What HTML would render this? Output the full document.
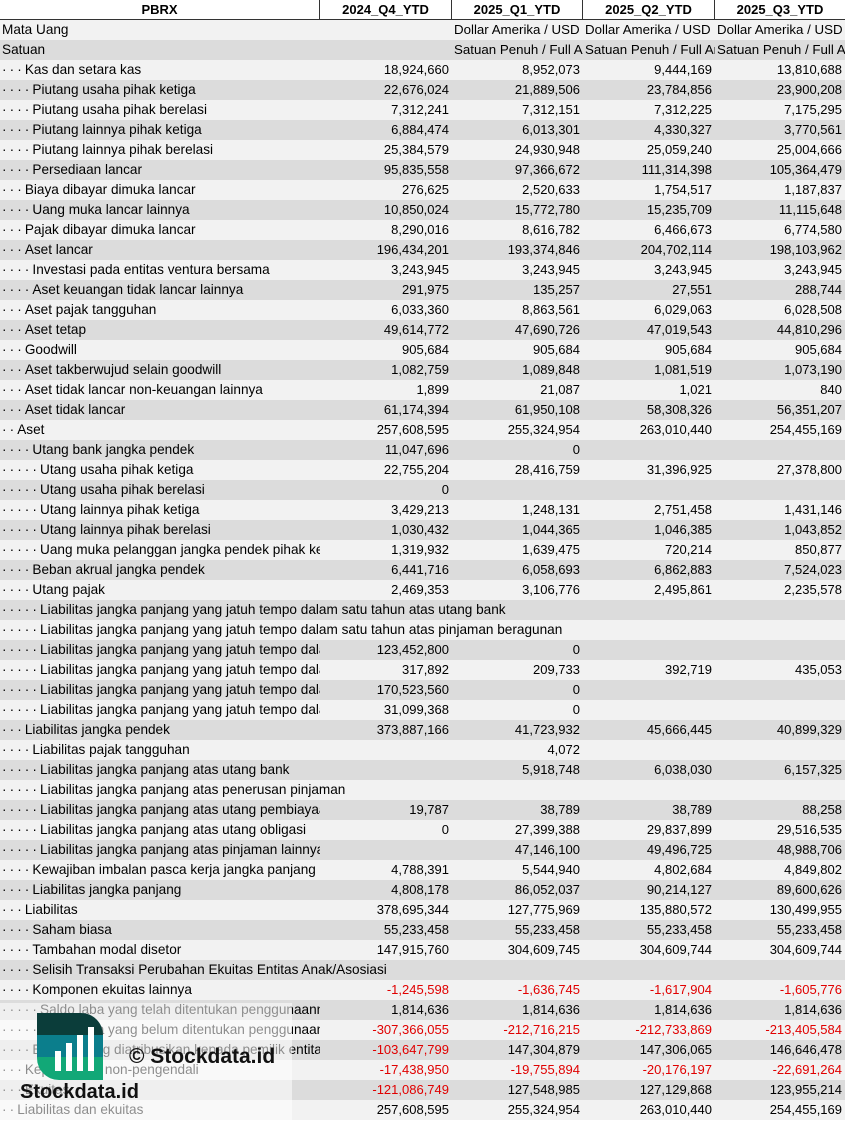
<!DOCTYPE html>
<html><head><meta charset="utf-8"><style>
*{margin:0;padding:0;box-sizing:border-box}
body{width:845px;height:1121px;overflow:hidden;background:#fff;font-family:"Liberation Sans",Arial,sans-serif;font-size:13px;color:#000;position:relative}
.h{display:flex;height:20px;background:#fff;border-bottom:1px solid #333;font-weight:bold}
.h span{display:block;text-align:center;line-height:19px;border-right:1px solid #333;overflow:hidden;white-space:nowrap}
.r{display:flex;height:20px;line-height:20px;white-space:nowrap}
.r:nth-child(odd){background:#f2f2f2}
.r:nth-child(even){background:#dcdcdc}
.r span{display:block;overflow:hidden;white-space:nowrap}
.l{width:320px;padding-left:2px;font-size:13.6px}
.l i{font-style:normal;letter-spacing:-0.35px}
.w{width:845px}
.c1{width:132px}.c2{width:131px}.c3{width:132px}.c4{width:130px}
.v{text-align:right;padding-right:3px}
.t{text-align:left;padding-left:2px;font-size:13.3px}
.red{color:#e00000}
.ov{position:absolute;left:0;top:1003px;width:292px;height:118px;background:rgba(255,255,255,0.55)}
.logo{position:absolute;left:37px;top:1013px;width:66px;height:67px;border-radius:0 22px 0 22px;overflow:hidden}
.wm1{position:absolute;left:129px;top:1045px;font-weight:bold;font-size:21px;color:#111}
.wm2{position:absolute;left:20px;top:1081px;font-weight:bold;font-size:20px;color:#111}
</style></head><body>
<div class="h"><span style="width:320px">PBRX</span><span style="width:132px">2024_Q4_YTD</span><span style="width:131px">2025_Q1_YTD</span><span style="width:132px">2025_Q2_YTD</span><span style="width:130px;border-right:none">2025_Q3_YTD</span></div>
<div>
<div class="r"><span class="l">Mata Uang</span><span class="c1"></span><span class="c2 t">Dollar Amerika / USD</span><span class="c3 t">Dollar Amerika / USD</span><span class="c4 t">Dollar Amerika / USD</span></div>
<div class="r"><span class="l">Satuan</span><span class="c1"></span><span class="c2 t">Satuan Penuh / Full Amount</span><span class="c3 t">Satuan Penuh / Full Amount</span><span class="c4 t">Satuan Penuh / Full Amount</span></div>
<div class="r"><span class="l"><i>· · · </i>Kas dan setara kas</span><span class="c1 v">18,924,660</span><span class="c2 v">8,952,073</span><span class="c3 v">9,444,169</span><span class="c4 v">13,810,688</span></div>
<div class="r"><span class="l"><i>· · · · </i>Piutang usaha pihak ketiga</span><span class="c1 v">22,676,024</span><span class="c2 v">21,889,506</span><span class="c3 v">23,784,856</span><span class="c4 v">23,900,208</span></div>
<div class="r"><span class="l"><i>· · · · </i>Piutang usaha pihak berelasi</span><span class="c1 v">7,312,241</span><span class="c2 v">7,312,151</span><span class="c3 v">7,312,225</span><span class="c4 v">7,175,295</span></div>
<div class="r"><span class="l"><i>· · · · </i>Piutang lainnya pihak ketiga</span><span class="c1 v">6,884,474</span><span class="c2 v">6,013,301</span><span class="c3 v">4,330,327</span><span class="c4 v">3,770,561</span></div>
<div class="r"><span class="l"><i>· · · · </i>Piutang lainnya pihak berelasi</span><span class="c1 v">25,384,579</span><span class="c2 v">24,930,948</span><span class="c3 v">25,059,240</span><span class="c4 v">25,004,666</span></div>
<div class="r"><span class="l"><i>· · · · </i>Persediaan lancar</span><span class="c1 v">95,835,558</span><span class="c2 v">97,366,672</span><span class="c3 v">111,314,398</span><span class="c4 v">105,364,479</span></div>
<div class="r"><span class="l"><i>· · · </i>Biaya dibayar dimuka lancar</span><span class="c1 v">276,625</span><span class="c2 v">2,520,633</span><span class="c3 v">1,754,517</span><span class="c4 v">1,187,837</span></div>
<div class="r"><span class="l"><i>· · · · </i>Uang muka lancar lainnya</span><span class="c1 v">10,850,024</span><span class="c2 v">15,772,780</span><span class="c3 v">15,235,709</span><span class="c4 v">11,115,648</span></div>
<div class="r"><span class="l"><i>· · · </i>Pajak dibayar dimuka lancar</span><span class="c1 v">8,290,016</span><span class="c2 v">8,616,782</span><span class="c3 v">6,466,673</span><span class="c4 v">6,774,580</span></div>
<div class="r"><span class="l"><i>· · · </i>Aset lancar</span><span class="c1 v">196,434,201</span><span class="c2 v">193,374,846</span><span class="c3 v">204,702,114</span><span class="c4 v">198,103,962</span></div>
<div class="r"><span class="l"><i>· · · · </i>Investasi pada entitas ventura bersama</span><span class="c1 v">3,243,945</span><span class="c2 v">3,243,945</span><span class="c3 v">3,243,945</span><span class="c4 v">3,243,945</span></div>
<div class="r"><span class="l"><i>· · · · </i>Aset keuangan tidak lancar lainnya</span><span class="c1 v">291,975</span><span class="c2 v">135,257</span><span class="c3 v">27,551</span><span class="c4 v">288,744</span></div>
<div class="r"><span class="l"><i>· · · </i>Aset pajak tangguhan</span><span class="c1 v">6,033,360</span><span class="c2 v">8,863,561</span><span class="c3 v">6,029,063</span><span class="c4 v">6,028,508</span></div>
<div class="r"><span class="l"><i>· · · </i>Aset tetap</span><span class="c1 v">49,614,772</span><span class="c2 v">47,690,726</span><span class="c3 v">47,019,543</span><span class="c4 v">44,810,296</span></div>
<div class="r"><span class="l"><i>· · · </i>Goodwill</span><span class="c1 v">905,684</span><span class="c2 v">905,684</span><span class="c3 v">905,684</span><span class="c4 v">905,684</span></div>
<div class="r"><span class="l"><i>· · · </i>Aset takberwujud selain goodwill</span><span class="c1 v">1,082,759</span><span class="c2 v">1,089,848</span><span class="c3 v">1,081,519</span><span class="c4 v">1,073,190</span></div>
<div class="r"><span class="l"><i>· · · </i>Aset tidak lancar non-keuangan lainnya</span><span class="c1 v">1,899</span><span class="c2 v">21,087</span><span class="c3 v">1,021</span><span class="c4 v">840</span></div>
<div class="r"><span class="l"><i>· · · </i>Aset tidak lancar</span><span class="c1 v">61,174,394</span><span class="c2 v">61,950,108</span><span class="c3 v">58,308,326</span><span class="c4 v">56,351,207</span></div>
<div class="r"><span class="l"><i>· · </i>Aset</span><span class="c1 v">257,608,595</span><span class="c2 v">255,324,954</span><span class="c3 v">263,010,440</span><span class="c4 v">254,455,169</span></div>
<div class="r"><span class="l"><i>· · · · </i>Utang bank jangka pendek</span><span class="c1 v">11,047,696</span><span class="c2 v">0</span><span class="c3 v"></span><span class="c4 v"></span></div>
<div class="r"><span class="l"><i>· · · · · </i>Utang usaha pihak ketiga</span><span class="c1 v">22,755,204</span><span class="c2 v">28,416,759</span><span class="c3 v">31,396,925</span><span class="c4 v">27,378,800</span></div>
<div class="r"><span class="l"><i>· · · · · </i>Utang usaha pihak berelasi</span><span class="c1 v">0</span><span class="c2 v"></span><span class="c3 v"></span><span class="c4 v"></span></div>
<div class="r"><span class="l"><i>· · · · · </i>Utang lainnya pihak ketiga</span><span class="c1 v">3,429,213</span><span class="c2 v">1,248,131</span><span class="c3 v">2,751,458</span><span class="c4 v">1,431,146</span></div>
<div class="r"><span class="l"><i>· · · · · </i>Utang lainnya pihak berelasi</span><span class="c1 v">1,030,432</span><span class="c2 v">1,044,365</span><span class="c3 v">1,046,385</span><span class="c4 v">1,043,852</span></div>
<div class="r"><span class="l"><i>· · · · · </i>Uang muka pelanggan jangka pendek pihak ketiga</span><span class="c1 v">1,319,932</span><span class="c2 v">1,639,475</span><span class="c3 v">720,214</span><span class="c4 v">850,877</span></div>
<div class="r"><span class="l"><i>· · · · </i>Beban akrual jangka pendek</span><span class="c1 v">6,441,716</span><span class="c2 v">6,058,693</span><span class="c3 v">6,862,883</span><span class="c4 v">7,524,023</span></div>
<div class="r"><span class="l"><i>· · · · </i>Utang pajak</span><span class="c1 v">2,469,353</span><span class="c2 v">3,106,776</span><span class="c3 v">2,495,861</span><span class="c4 v">2,235,578</span></div>
<div class="r"><span class="l w"><i>· · · · · </i>Liabilitas jangka panjang yang jatuh tempo dalam satu tahun atas utang bank</span></div>
<div class="r"><span class="l w"><i>· · · · · </i>Liabilitas jangka panjang yang jatuh tempo dalam satu tahun atas pinjaman beragunan</span></div>
<div class="r"><span class="l"><i>· · · · · </i>Liabilitas jangka panjang yang jatuh tempo dalam satu tahun</span><span class="c1 v">123,452,800</span><span class="c2 v">0</span><span class="c3 v"></span><span class="c4 v"></span></div>
<div class="r"><span class="l"><i>· · · · · </i>Liabilitas jangka panjang yang jatuh tempo dalam satu tahun</span><span class="c1 v">317,892</span><span class="c2 v">209,733</span><span class="c3 v">392,719</span><span class="c4 v">435,053</span></div>
<div class="r"><span class="l"><i>· · · · · </i>Liabilitas jangka panjang yang jatuh tempo dalam satu tahun</span><span class="c1 v">170,523,560</span><span class="c2 v">0</span><span class="c3 v"></span><span class="c4 v"></span></div>
<div class="r"><span class="l"><i>· · · · · </i>Liabilitas jangka panjang yang jatuh tempo dalam satu tahun</span><span class="c1 v">31,099,368</span><span class="c2 v">0</span><span class="c3 v"></span><span class="c4 v"></span></div>
<div class="r"><span class="l"><i>· · · </i>Liabilitas jangka pendek</span><span class="c1 v">373,887,166</span><span class="c2 v">41,723,932</span><span class="c3 v">45,666,445</span><span class="c4 v">40,899,329</span></div>
<div class="r"><span class="l"><i>· · · · </i>Liabilitas pajak tangguhan</span><span class="c1 v"></span><span class="c2 v">4,072</span><span class="c3 v"></span><span class="c4 v"></span></div>
<div class="r"><span class="l"><i>· · · · · </i>Liabilitas jangka panjang atas utang bank</span><span class="c1 v"></span><span class="c2 v">5,918,748</span><span class="c3 v">6,038,030</span><span class="c4 v">6,157,325</span></div>
<div class="r"><span class="l w"><i>· · · · · </i>Liabilitas jangka panjang atas penerusan pinjaman</span></div>
<div class="r"><span class="l"><i>· · · · · </i>Liabilitas jangka panjang atas utang pembiayaan konsumen</span><span class="c1 v">19,787</span><span class="c2 v">38,789</span><span class="c3 v">38,789</span><span class="c4 v">88,258</span></div>
<div class="r"><span class="l"><i>· · · · · </i>Liabilitas jangka panjang atas utang obligasi</span><span class="c1 v">0</span><span class="c2 v">27,399,388</span><span class="c3 v">29,837,899</span><span class="c4 v">29,516,535</span></div>
<div class="r"><span class="l"><i>· · · · · </i>Liabilitas jangka panjang atas pinjaman lainnya</span><span class="c1 v"></span><span class="c2 v">47,146,100</span><span class="c3 v">49,496,725</span><span class="c4 v">48,988,706</span></div>
<div class="r"><span class="l"><i>· · · · </i>Kewajiban imbalan pasca kerja jangka panjang</span><span class="c1 v">4,788,391</span><span class="c2 v">5,544,940</span><span class="c3 v">4,802,684</span><span class="c4 v">4,849,802</span></div>
<div class="r"><span class="l"><i>· · · · </i>Liabilitas jangka panjang</span><span class="c1 v">4,808,178</span><span class="c2 v">86,052,037</span><span class="c3 v">90,214,127</span><span class="c4 v">89,600,626</span></div>
<div class="r"><span class="l"><i>· · · </i>Liabilitas</span><span class="c1 v">378,695,344</span><span class="c2 v">127,775,969</span><span class="c3 v">135,880,572</span><span class="c4 v">130,499,955</span></div>
<div class="r"><span class="l"><i>· · · · </i>Saham biasa</span><span class="c1 v">55,233,458</span><span class="c2 v">55,233,458</span><span class="c3 v">55,233,458</span><span class="c4 v">55,233,458</span></div>
<div class="r"><span class="l"><i>· · · · </i>Tambahan modal disetor</span><span class="c1 v">147,915,760</span><span class="c2 v">304,609,745</span><span class="c3 v">304,609,744</span><span class="c4 v">304,609,744</span></div>
<div class="r"><span class="l w"><i>· · · · </i>Selisih Transaksi Perubahan Ekuitas Entitas Anak/Asosiasi</span></div>
<div class="r"><span class="l"><i>· · · · </i>Komponen ekuitas lainnya</span><span class="c1 v red">-1,245,598</span><span class="c2 v red">-1,636,745</span><span class="c3 v red">-1,617,904</span><span class="c4 v red">-1,605,776</span></div>
<div class="r"><span class="l"><i>· · · · · </i>Saldo laba yang telah ditentukan penggunaannya</span><span class="c1 v">1,814,636</span><span class="c2 v">1,814,636</span><span class="c3 v">1,814,636</span><span class="c4 v">1,814,636</span></div>
<div class="r"><span class="l"><i>· · · · · </i>Saldo laba yang belum ditentukan penggunaannya</span><span class="c1 v red">-307,366,055</span><span class="c2 v red">-212,716,215</span><span class="c3 v red">-212,733,869</span><span class="c4 v red">-213,405,584</span></div>
<div class="r"><span class="l"><i>· · · · </i>Ekuitas yang diatribusikan kepada pemilik entitas induk</span><span class="c1 v red">-103,647,799</span><span class="c2 v">147,304,879</span><span class="c3 v">147,306,065</span><span class="c4 v">146,646,478</span></div>
<div class="r"><span class="l"><i>· · · </i>Kepentingan non-pengendali</span><span class="c1 v red">-17,438,950</span><span class="c2 v red">-19,755,894</span><span class="c3 v red">-20,176,197</span><span class="c4 v red">-22,691,264</span></div>
<div class="r"><span class="l"><i>· · · </i>Ekuitas</span><span class="c1 v red">-121,086,749</span><span class="c2 v">127,548,985</span><span class="c3 v">127,129,868</span><span class="c4 v">123,955,214</span></div>
<div class="r"><span class="l"><i>· · </i>Liabilitas dan ekuitas</span><span class="c1 v">257,608,595</span><span class="c2 v">255,324,954</span><span class="c3 v">263,010,440</span><span class="c4 v">254,455,169</span></div>
</div>
<div class="ov"></div>
<div class="logo"><svg width="66" height="67" viewBox="0 0 66 67"><rect width="66" height="22" fill="#0b3d3a"/><rect y="22" width="66" height="22" fill="#0b7e8c"/><rect y="44" width="66" height="23" fill="#12a877"/><rect x="18" y="38" width="6" height="20" fill="#fff"/><rect x="29" y="30" width="6" height="28" fill="#fff"/><rect x="40" y="22" width="6" height="36" fill="#fff"/><rect x="51" y="14" width="6" height="44" fill="#fff"/></svg></div>
<div class="wm1">© Stockdata.id</div>
<div class="wm2">Stockdata.id</div>
</body></html>
